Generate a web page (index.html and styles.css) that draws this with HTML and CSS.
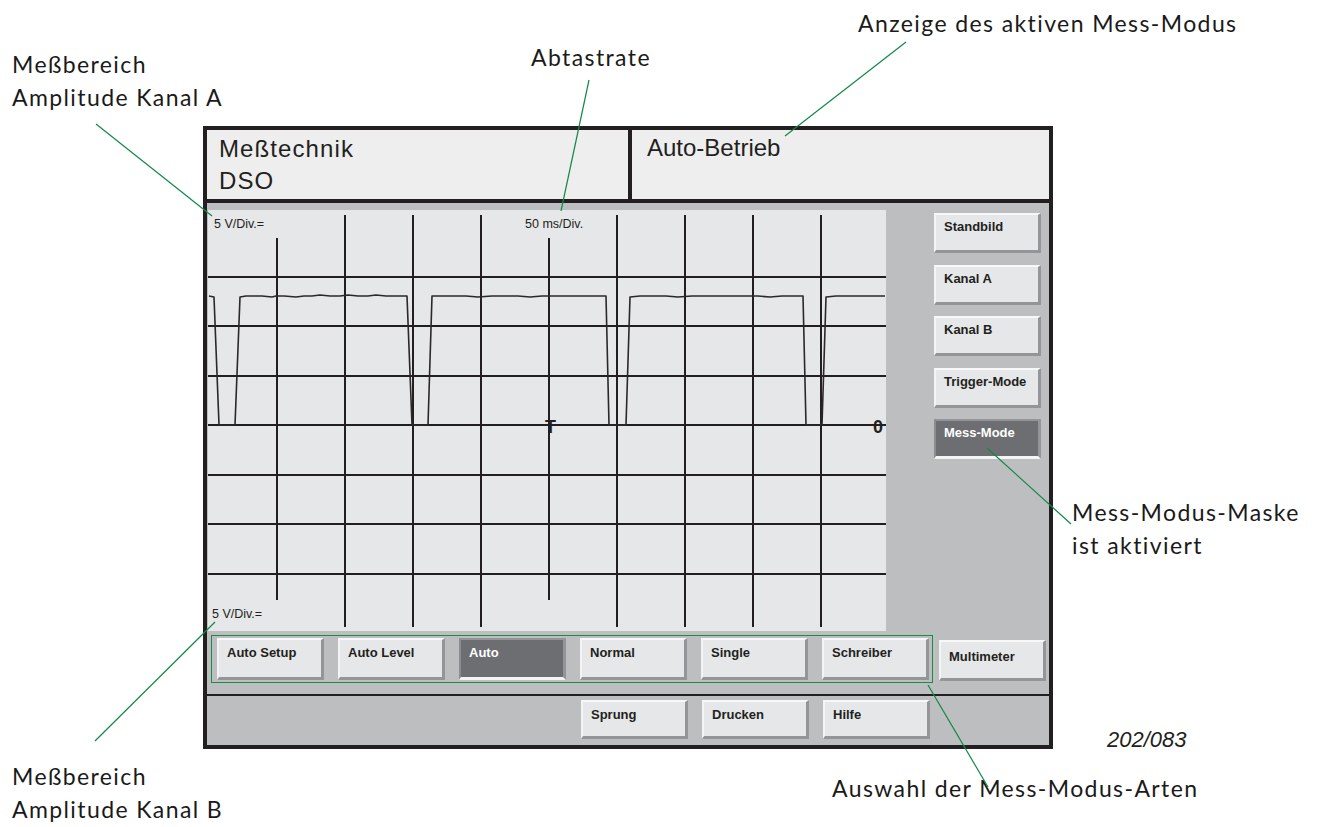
FILE: index.html
```html
<!DOCTYPE html>
<html lang="de">
<head>
<meta charset="utf-8">
<title>Meßtechnik DSO</title>
<link rel="stylesheet" href="styles.css">
</head>
<body>
<div class="page">
  <div class="device">
    <header class="head">
      <div class="head-left">
        <div class="title">Meßtechnik</div>
        <div class="title">DSO</div>
      </div>
      <div class="head-right">
        <div class="mode">Auto-Betrieb</div>
      </div>
    </header>
    <main class="body">
      <div class="upper">
        <div class="scope">
          <svg class="scope-svg" width="678" height="421" viewBox="0 0 678 421">
            <g class="grid">
              <line x1="69" y1="28" x2="69" y2="390"/>
              <line x1="137" y1="5" x2="137" y2="417"/>
              <line x1="205" y1="5" x2="205" y2="417"/>
              <line x1="273" y1="5" x2="273" y2="417"/>
              <line x1="341" y1="28" x2="341" y2="390"/>
              <line x1="409" y1="5" x2="409" y2="417"/>
              <line x1="477" y1="5" x2="477" y2="417"/>
              <line x1="545" y1="5" x2="545" y2="417"/>
              <line x1="613" y1="5" x2="613" y2="417"/>
              <line x1="0" y1="67" x2="678" y2="67"/>
              <line x1="0" y1="116" x2="678" y2="116"/>
              <line x1="0" y1="166" x2="678" y2="166"/>
              <line x1="0" y1="215" x2="678" y2="215"/>
              <line x1="0" y1="265" x2="678" y2="265"/>
              <line x1="0" y1="314" x2="678" y2="314"/>
              <line x1="0" y1="364" x2="678" y2="364"/>
            </g>
            <polyline class="wave" points="1,86 6,87 11,215 27,215 32,87 38,86 46,86 54,86 64,87 68,86 76,86 88,87 96,86 104,86 112,85 122,86 132,86 140,85 150,86 160,86 168,85 178,86 188,86 199,86 204,215 220,215 224,86 234,86 246,86 258,86 270,87 284,86 296,86 310,86 322,87 334,86 348,86 360,86 372,86 386,86 398,86 401,215 418,215 422,87 432,86 446,86 458,86 470,87 484,86 498,86 510,86 522,86 536,86 550,86 562,87 574,86 586,86 595,86 598,215 614,215 618,87 628,86 640,86 656,86 668,86 677,86"/>
            <text class="lbl" x="6" y="18">5 V/Div.=</text>
            <text class="lbl" x="317" y="18">50 ms/Div.</text>
            <text class="lbl" x="4" y="408">5 V/Div.=</text>
            <text class="mark" x="337" y="223">T</text>
            <text class="mark" x="665" y="223">0</text>
          </svg>
        </div>
        <div class="side">
          <div class="btn side-btn">Standbild</div>
          <div class="btn side-btn">Kanal A</div>
          <div class="btn side-btn">Kanal B</div>
          <div class="btn side-btn">Trigger-Mode</div>
          <div class="btn side-btn on">Mess-Mode</div>
        </div>
      </div>
      <div class="lower">
        <div class="group">
          <div class="btn row-btn">Auto Setup</div>
          <div class="btn row-btn">Auto Level</div>
          <div class="btn row-btn on">Auto</div>
          <div class="btn row-btn">Normal</div>
          <div class="btn row-btn">Single</div>
          <div class="btn row-btn">Schreiber</div>
        </div>
        <div class="btn multi-btn">Multimeter</div>
      </div>
    </main>
    <footer class="foot">
      <div class="btn foot-btn">Sprung</div>
      <div class="btn foot-btn">Drucken</div>
      <div class="btn foot-btn">Hilfe</div>
    </footer>
  </div>

  <div class="note note-a">Meßbereich<br>Amplitude Kanal A</div>
  <div class="note note-rate">Abtastrate</div>
  <div class="note note-mode">Anzeige des aktiven Mess-Modus</div>
  <div class="note note-mask">Mess-Modus-Maske<br>ist aktiviert</div>
  <div class="note note-b">Meßbereich<br>Amplitude Kanal B</div>
  <div class="note note-sel">Auswahl der Mess-Modus-Arten</div>
  <div class="figno">202/083</div>

  <svg class="leaders" width="1319" height="827" viewBox="0 0 1319 827">
    <line x1="96" y1="124" x2="212" y2="216"/>
    <line x1="589" y1="80" x2="561" y2="211"/>
    <line x1="906" y1="42" x2="785" y2="136"/>
    <line x1="987" y1="448" x2="1071" y2="524"/>
    <line x1="215" y1="622" x2="95" y2="741"/>
    <line x1="928" y1="685" x2="988" y2="787"/>
  </svg>
</div>
</body>
</html>
```
FILE: styles.css
```css
html, body {
  margin: 0;
  padding: 0;
  background: #ffffff;
}

.page {
  position: relative;
  width: 1319px;
  height: 827px;
  overflow: hidden;
  box-sizing: border-box;
  padding: 126px 0 0 203px;
  font-family: "Liberation Sans", Arial, sans-serif;
  color: #231f20;
}

.device {
  width: 850px;
  height: 623px;
  box-sizing: border-box;
  border: 4px solid #231f20;
  display: flex;
  flex-direction: column;
  background: #bcbec0;
}

/* header */
.head {
  height: 73px;
  box-sizing: border-box;
  border-bottom: 4px solid #231f20;
  display: flex;
  background: #eeeeef;
}

.head-left {
  width: 425px;
  box-sizing: border-box;
  border-right: 4px solid #231f20;
  padding: 3px 0 0 12px;
}

.title {
  font-size: 24px;
  line-height: 32px;
  letter-spacing: 1.1px;
  color: #231f20;
}

.head-right {
  flex: 1;
  padding: 2px 0 0 15px;
}

.mode {
  font-size: 24px;
  line-height: 32px;
  color: #231f20;
}

/* body */
.body {
  height: 491px;
  box-sizing: border-box;
  padding: 7px 0 0 1px;
  background: #bcbec0;
}

.upper {
  display: flex;
  height: 421px;
}

.scope {
  width: 678px;
  height: 421px;
  background: #e6e7e8;
  flex: none;
}

.scope-svg {
  display: block;
}

.grid line {
  stroke: #231f20;
  stroke-width: 2;
}

.wave {
  fill: none;
  stroke: #2b2829;
  stroke-width: 1.6;
  stroke-linejoin: round;
}

.lbl {
  font-family: "Liberation Sans", Arial, sans-serif;
  font-size: 12.5px;
  fill: #231f20;
}

.mark {
  font-family: "Liberation Sans", Arial, sans-serif;
  font-size: 18px;
  font-weight: bold;
  fill: #231f20;
}

.side {
  margin-left: 48px;
  padding-top: 3px;
  display: flex;
  flex-direction: column;
  gap: 11.5px;
}

/* buttons */
.btn {
  box-sizing: border-box;
  width: 107px;
  background: #e6e7e8;
  border-style: solid;
  border-width: 2px 3px 3px 2px;
  border-color: #f8f8f8 #939598 #939598 #f4f4f4;
  font-size: 13px;
  font-weight: bold;
  line-height: 15px;
  color: #231f20;
  padding: 5px 0 0 8px;
  white-space: nowrap;
  flex: none;
}

.btn.on {
  background: #6d6e71;
  color: #ffffff;
  border-color: #939598 #939598 #f4f4f4 #8a8c8f;
}

.side-btn {
  height: 40px;
  padding-top: 4px;
}

.lower {
  display: flex;
  align-items: flex-start;
  margin: 4px 0 0 3px;
}

.group {
  display: flex;
  gap: 14px;
  border: 1px solid #1a8c45;
  padding: 2px 3px 2px 5px;
}

.row-btn {
  height: 42px;
}

.multi-btn {
  height: 41px;
  margin: 5px 0 0 6px;
  padding-top: 7px;
}

/* footer */
.foot {
  height: 51px;
  box-sizing: border-box;
  border-top: 2px solid #231f20;
  padding: 4px 0 0 374px;
  display: flex;
  gap: 14px;
  background: #bcbec0;
}

.foot-btn {
  height: 39px;
}

/* annotations */
.note {
  position: absolute;
  font-family: Lato, "DejaVu Sans", sans-serif;
  font-size: 23px;
  line-height: 33px;
  letter-spacing: 1.4px;
  color: #1a1a1a;
  white-space: nowrap;
}

.note-a { left: 12px; top: 48px; }
.note-rate { left: 531px; top: 41px; }
.note-mode { left: 858px; top: 7px; }
.note-mask { left: 1072px; top: 496px; }
.note-b { left: 12px; top: 760px; }
.note-sel { left: 832px; top: 772px; }

.figno {
  position: absolute;
  left: 1107px;
  top: 728px;
  font-family: "Liberation Sans", Arial, sans-serif;
  font-style: italic;
  font-size: 22px;
  line-height: 24px;
  color: #231f20;
}

.leaders {
  position: absolute;
  left: 0;
  top: 0;
  pointer-events: none;
}

.leaders line {
  stroke: #12884a;
  stroke-width: 1.2;
}
```
